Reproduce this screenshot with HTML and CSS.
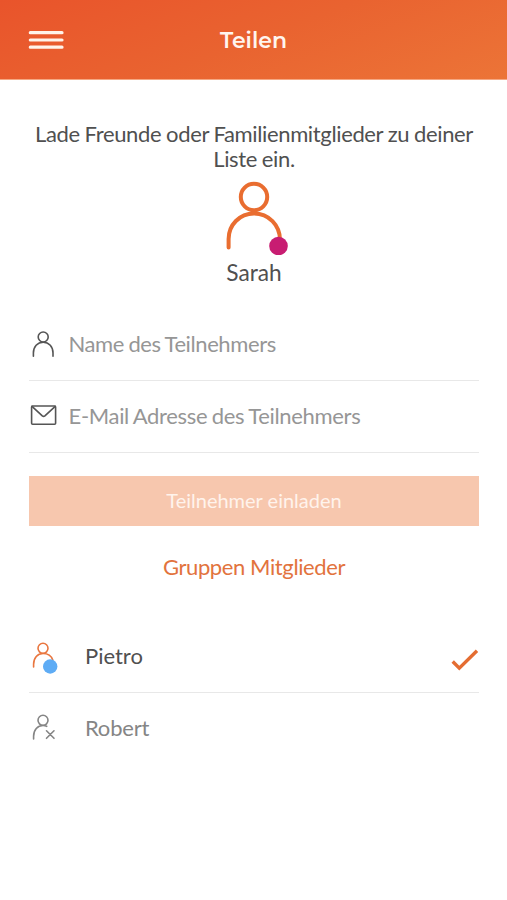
FILE: index.html
```html
<!DOCTYPE html>
<html lang="de">
<head>
<meta charset="utf-8">
<meta name="viewport" content="width=device-width, initial-scale=1">
<title>Teilen</title>
<link rel="stylesheet" href="styles.css">
</head>
<body>
<header class="topbar">
  <button class="menu" aria-label="Menü"><svg width="36" height="20" viewBox="0 0 36 20"><path d="M2.3 2.7H34M2.3 10H34M2.3 17.2H34"/></svg></button>
  <h1 class="title">Teilen</h1>
</header>
<main class="content">
  <p class="intro">Lade Freunde oder Familienmitglieder zu deiner Liste ein.</p>
  <section class="owner">
    <svg class="owner-icon" width="80" height="80" viewBox="0 0 80 80">
      <circle cx="40" cy="22" r="13.2"/>
      <path d="M14.6 72.5V64C14.6 50 25.5 38.5 40 38.5S66 50 66 65V70"/>
      <circle class="badge-pink" cx="64.5" cy="71" r="9.3"/>
    </svg>
    <span class="owner-name">Sarah</span>
  </section>
  <form class="form">
    <div class="field">
      <svg class="icon" width="30" height="30" viewBox="0 0 30 30"><circle cx="14.2" cy="7" r="5"/><path d="M4.4 26.3V23C4.4 16.8 8.4 12.2 14.2 12.2S24 16.8 24 23V26.3"/></svg>
      <span class="hint">Name des Teilnehmers</span>
    </div>
    <div class="field">
      <svg class="icon" width="30" height="30" viewBox="0 0 30 30"><rect x="2.6" y="4" width="24" height="18.2" rx="1"/><path d="M3 4.4L13.3 13.9Q14.6 15 15.9 13.9L26.2 4.4"/></svg>
      <span class="hint hint-mail">E-Mail Adresse des Teilnehmers</span>
    </div>
    <button type="button" class="invite">Teilnehmer einladen</button>
  </form>
  <h2 class="group">Gruppen Mitglieder</h2>
  <ul class="members">
    <li class="member">
      <svg class="icon active" width="32" height="34" viewBox="0 0 32 34"><circle cx="14" cy="8.3" r="5"/><path d="M4.6 27V24.3C4.6 17.8 8.6 13.5 14 13.5S22.5 16.3 23.8 20"/><circle class="badge-blue" cx="21.2" cy="26.5" r="7.2"/></svg>
      <span class="member-name">Pietro</span>
      <svg class="check" width="30" height="34" viewBox="0 0 30 34"><path d="M3.7 21.5L10.3 28.2L28 10.7"/></svg>
    </li>
    <li class="member pending">
      <svg class="icon" width="32" height="34" viewBox="0 0 32 34"><circle cx="14" cy="8.3" r="5"/><path d="M4.6 27V24.3C4.6 17.8 8.6 13.5 14 13.5Q16 13.5 17.7 14.3M17.5 18.8L25 26.3M25 18.8L17.5 26.3"/></svg>
      <span class="member-name">Robert</span>
    </li>
  </ul>
</main>
</body>
</html>
```
FILE: styles.css
```css
* { box-sizing: border-box; }
body {
  margin: 0;
  background: #fff;
  color: #505050;
  font-family: Lato, "Liberation Sans", sans-serif;
  font-size: 22px;
}
button { border: 0; padding: 0; font: inherit; }
svg { display: block; fill: none; flex: none; stroke-linecap: round; stroke-linejoin: round; }
.topbar {
  display: grid;
  grid-template-columns: 36px 1fr 36px;
  align-items: center;
  height: 80px;
  padding: 0 28px;
  background: linear-gradient(160deg, #e9542b 0%, #e96330 50%, #ec7437 100%);
  border-bottom: 1px solid #f5a883;
}
.menu { background: none; }
.menu svg { stroke: #fff3ea; stroke-width: 3.2; }
.title {
  margin: 0;
  padding-top: 2px;
  color: #fff5ee;
  font: 600 22px/28px Montserrat, Inter, sans-serif;
  text-align: center;
}
.content { padding: 41px 28px 0 29px; }
.intro { margin: 0; line-height: 25px; letter-spacing: -0.36px; word-spacing: -0.4px; text-align: center; }
.owner { display: flex; flex-direction: column; align-items: center; margin-top: 4px; }
.owner-icon { stroke: #e96d30; stroke-width: 4; }
.badge-pink { fill: #c81d72; stroke: none; }
.badge-blue { fill: #5eacf5; stroke: none; }
.owner-name { margin-top: 5px; font-size: 22.7px; line-height: 26px; }
.form { margin-top: 23px; }
.field {
  display: flex;
  align-items: center;
  gap: 9.5px;
  height: 72px;
  border-bottom: 1px solid #e8e8e8;
}
.hint { padding-bottom: 2px; color: #969696; letter-spacing: -0.4px; word-spacing: -0.8px; }
.hint-mail { letter-spacing: -0.32px; }
.icon { stroke: #555; stroke-width: 1.6; }
.active { stroke: #e9763f; }
.invite {
  display: block;
  width: 100%;
  height: 50px;
  margin-top: 23px;
  padding-bottom: 2px;
  background: #f7c7ae;
  color: #fff3ec;
  font-size: 20px;
}
.group { margin: 28px 0 0; color: #e2733d; font-weight: 400; font-size: 22px; letter-spacing: -0.4px; line-height: 26px; text-align: center; }
.members { margin: 41px 0 0; padding: 0; list-style: none; }
.member { display: flex; align-items: center; height: 72px; border-bottom: 1px solid #e8e8e8; }
.member:last-child { border-bottom: 0; }
.member-name { flex: 1; margin-left: 24px; padding-bottom: 2px; }
.pending { color: #858585; }
.pending .member-name { padding-bottom: 4px; letter-spacing: -0.2px; }
.pending .icon { stroke: #858585; }
.check { stroke: #e46d32; stroke-width: 3.4; stroke-linecap: butt; stroke-linejoin: miter; }
```
